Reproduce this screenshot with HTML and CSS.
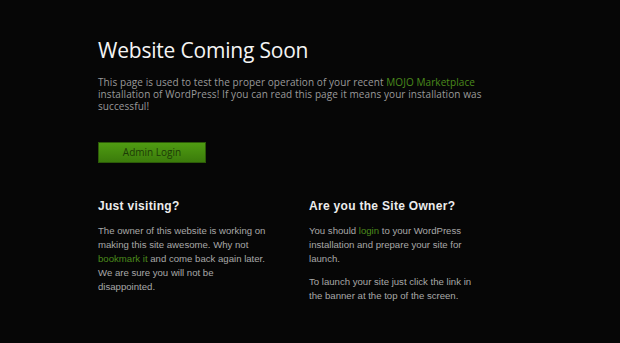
FILE: index.html
```html
<!DOCTYPE html>
<html lang="en">
<head>
  <meta charset="UTF-8">
  <meta name="viewport" content="width=device-width, initial-scale=1.0">
  <title>Website Coming Soon</title>
  <link rel="stylesheet" href="styles.css">
</head>
<body>
  <div id="page">
    <h1>Website Coming Soon</h1>
    <p class="intro">This page is used to test the proper operation of your recent <a href="#">MOJO Marketplace</a> installation of WordPress! If you can read this page it means your installation was successful!</p>
    <a class="admin-btn" href="#">Admin Login</a>

    <div class="columns">
      <div class="col">
        <h2>Just visiting?</h2>
        <p>The owner of this website is working on making this site awesome. Why not <a href="#">bookmark it</a> and come back again later. We are sure you will not be disappointed.</p>
      </div>
      <div class="col">
        <h2>Are you the Site Owner?</h2>
        <p>You should <a href="#">login</a> to your WordPress installation and prepare your site for launch.</p>
        <p>To launch your site just click the link in the banner at the top of the screen.</p>
      </div>
    </div>
  </div>
</body>
</html>
```

FILE: styles.css
```css
body {
  margin: 0;
  padding: 0;
  background-color: #060606;
  font-family: "Liberation Sans", Arial, sans-serif;
  color: #a8a8a8;
}

#page {
  width: 422px;
  margin: 0 auto;
  padding: 36px 0 0 0;
  position: relative;
  left: -1px;
}

h1 {
  font-family: "Open Sans", sans-serif;
  font-weight: 400;
  font-size: 21px;
  letter-spacing: -0.2px;
  color: #f4f4f4;
  margin: 0 0 12px 0;
  line-height: 28px;
}

a {
  color: #4b8a1c;
  text-decoration: none;
}

.intro {
  font-family: "Open Sans", sans-serif;
  font-size: 10px;
  letter-spacing: 0.08px;
  line-height: 12px;
  color: #9a9a9a;
  margin: 0 0 30px 0;
}

.admin-btn {
  display: block;
  width: 106px;
  height: 19px;
  line-height: 19px;
  text-align: center;
  font-family: "Open Sans", sans-serif;
  font-size: 10px;
  color: #1d3a07;
  background: linear-gradient(#4f9c12, #3b7b0b);
  border: 1px solid #2c5a08;
}

.columns {
  display: grid;
  grid-template-columns: 211px 1fr;
  margin-top: 36px;
}

h2 {
  font-size: 12px;
  font-weight: bold;
  color: #ececec;
  margin: 0 0 11px 0;
  letter-spacing: 0.3px;
}

.col p {
  font-size: 9.6px;
  line-height: 14px;
  margin: 0 0 9px 0;
  width: 170px;
}
```
